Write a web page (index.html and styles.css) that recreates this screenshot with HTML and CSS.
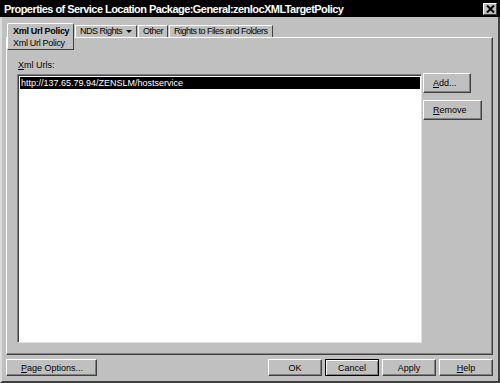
FILE: index.html
```html
<!DOCTYPE html>
<html lang="en">
<head>
    <meta charset="UTF-8">
    <title>Properties of Service Location Package</title>
    <link rel="stylesheet" href="styles.css">
</head>
<body>
    <div class="window">
        <div class="titlebar">
            <span class="title">Properties of Service Location Package:General:zenlocXMLTargetPolicy</span>
            <span class="close">
                <svg width="9" height="8" viewBox="0 0 9 8"><path d="M1 0.5 L8 7.5 M8 0.5 L1 7.5" stroke="#000" stroke-width="2"/></svg>
            </span>
        </div>

        <div class="tabs">
            <div class="tab active">
                <div class="tab-label">Xml Url Policy</div>
                <div class="subtab">Xml Url Policy</div>
            </div>
            <div class="tab">NDS Rights <span class="arrow"></span></div>
            <div class="tab">Other</div>
            <div class="tab">Rights to Files and Folders</div>
        </div>

        <div class="panel">
            <div class="field-label"><u>X</u>ml Urls:</div>
            <div class="panel-body">
                <div class="listbox">
                    <div class="row selected">http://137.65.79.94/ZENSLM/hostservice</div>
                </div>
                <div class="side-buttons">
                    <button class="btn btn-add"><u>A</u>dd...</button>
                    <button class="btn btn-remove"><u>R</u>emove</button>
                </div>
            </div>
        </div>

        <div class="footer">
            <button class="btn btn-page"><u>P</u>age Options...</button>
            <div class="footer-right">
                <button class="btn btn-foot">OK</button>
                <button class="btn btn-foot default">Cancel</button>
                <button class="btn btn-foot">Apply</button>
                <button class="btn btn-foot"><u>H</u>elp</button>
            </div>
        </div>
    </div>
</body>
</html>
```

FILE: styles.css
```css
body {
    margin: 0;
    background: #c0c0c0;
    font-family: "Liberation Sans", Arial, sans-serif;
    font-size: 9px;
    color: #000;
}

.window {
    width: 500px;
    height: 383px;
    box-sizing: border-box;
    background: #c0c0c0;
    border-left: 2px solid #dcdcdc;
    border-right: 2px solid #404040;
    border-bottom: 2px solid #404040;
    display: flex;
    flex-direction: column;
}

/* title bar */
.titlebar {
    height: 17px;
    margin-left: -2px;
    margin-right: -2px;
    background: #000;
    color: #fff;
    display: flex;
    align-items: center;
    justify-content: space-between;
    padding: 0 3px 0 4px;
}

.title {
    font-weight: bold;
    font-size: 11px;
    letter-spacing: -0.55px;
    white-space: nowrap;
}

.close {
    width: 14px;
    height: 12px;
    background: #c0c0c0;
    box-sizing: border-box;
    border: 1px solid;
    border-color: #fff #404040 #404040 #fff;
    display: flex;
    align-items: center;
    justify-content: center;
}

/* tabs */
.tabs {
    display: flex;
    align-items: flex-end;
    margin-top: 6px;
    padding-left: 5px;
    height: 14px;
    position: relative;
    z-index: 1;
}

.tab {
    height: 12px;
    box-sizing: border-box;
    padding: 0 4px;
    margin-right: 1px;
    border-top: 1px solid #fff;
    border-left: 1px solid #fff;
    border-right: 1px solid #404040;
    line-height: 11px;
    white-space: nowrap;
    letter-spacing: -0.5px;
    display: flex;
    align-items: center;
}

.tab.active {
    align-self: flex-start;
    height: 27px;
    margin-bottom: -13px;
    width: 67px;
    padding: 0;
    flex-direction: column;
    align-items: stretch;
    border-radius: 2px 2px 0 0;
    border-bottom: 1px solid #404040;
    background: #c0c0c0;
    letter-spacing: -0.3px;
}

.tab-label {
    font-weight: bold;
    padding: 2px 0 0 5px;
    height: 12px;
}

.subtab {
    padding-left: 5px;
}

.arrow {
    display: inline-block;
    width: 0;
    height: 0;
    margin-left: 4px;
    border-left: 3px solid transparent;
    border-right: 3px solid transparent;
    border-top: 3px solid #000;
}

/* main panel */
.panel {
    margin: 0 5px 0 4px;
    height: 318px;
    box-sizing: border-box;
    border: 1px solid;
    border-color: #fff #404040 #404040 #fff;
    box-shadow: inset -1px -1px 0 #808080;
    padding: 22px 10px 10px 10px;
}

.field-label {
    height: 14px;
    line-height: 11px;
    padding-left: 1px;
}

.panel-body {
    display: flex;
    gap: 1px;
}

.listbox {
    width: 405px;
    height: 269px;
    box-sizing: border-box;
    background: #fff;
    border: 1px solid;
    border-color: #808080 #dfdfdf #dfdfdf #808080;
    box-shadow: inset 1px 1px 0 #404040;
    padding: 2px 1px 0 2px;
}

.row {
    height: 12px;
    line-height: 12px;
    padding-left: 1px;
    white-space: nowrap;
}

.row.selected {
    background: #000;
    color: #fff;
}

.side-buttons {
    display: flex;
    flex-direction: column;
    align-items: flex-start;
    gap: 7px;
    margin-top: -1px;
}

/* buttons */
.btn {
    font-family: inherit;
    font-size: 9px;
    color: #000;
    background: #c0c0c0;
    box-sizing: border-box;
    border: 1px solid;
    border-color: #fff #404040 #404040 #fff;
    box-shadow: inset -1px -1px 0 #808080;
    padding: 0;
    margin: 0;
}

.btn-add {
    width: 48px;
    height: 20px;
    text-align: left;
    padding-left: 9px;
}

.btn-remove {
    width: 59px;
    height: 20px;
    text-align: left;
    padding-left: 9px;
}

.footer {
    display: flex;
    justify-content: space-between;
    margin-top: 4px;
    padding: 0 5px 0 4px;
}

.btn-page {
    width: 91px;
    height: 17px;
    text-align: left;
    padding-left: 14px;
}

.footer-right {
    display: flex;
    gap: 3px;
}

.btn-foot {
    width: 54px;
    height: 17px;
}

.btn-foot.default {
    border-color: #000;
    box-shadow: inset 1px 1px 0 #fff, inset -1px -1px 0 #808080;
}
```
